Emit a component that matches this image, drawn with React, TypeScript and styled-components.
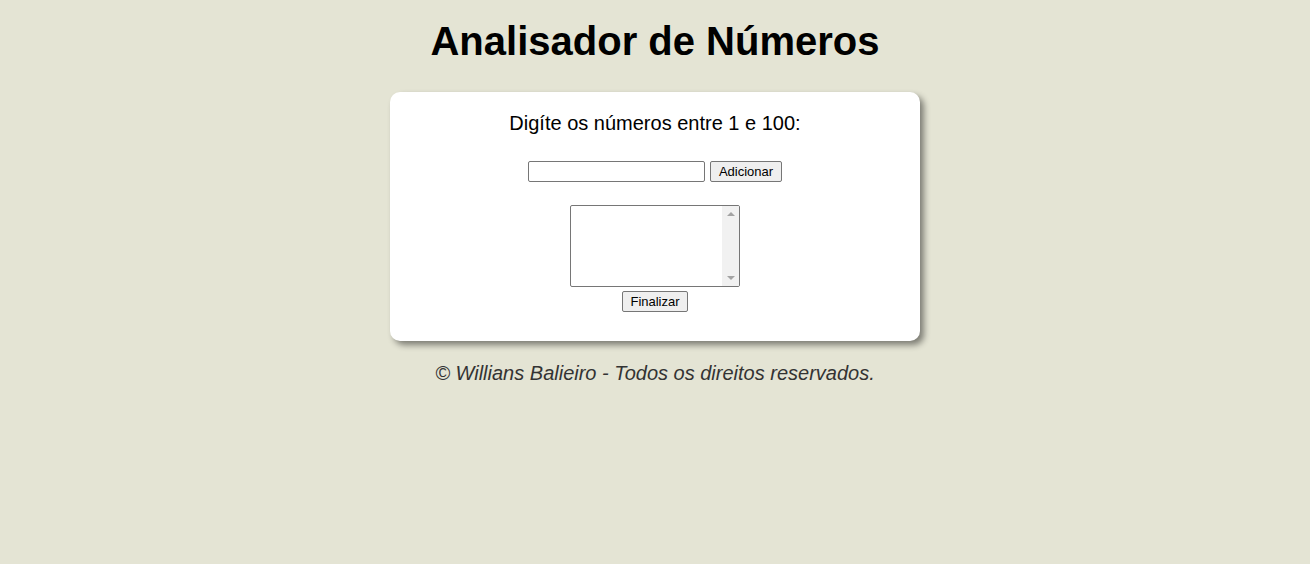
import React, { useState } from "react";
import styled, { createGlobalStyle } from "styled-components";

const GlobalStyle = createGlobalStyle`
  body {
    margin: 0;
    background-color: #e4e4d4;
    font-family: "Liberation Sans", Arial, sans-serif;
  }
`;

const Page = styled.div`
  display: flex;
  flex-direction: column;
  align-items: center;
  padding-top: 18px;
`;

const Title = styled.h1`
  margin: 0;
  font-size: 40px;
  font-weight: 700;
  line-height: 46px;
  color: #000;
`;

const Card = styled.section`
  width: 530px;
  box-sizing: border-box;
  margin-top: 28px;
  padding: 20px 0 29px;
  background: #fff;
  border-radius: 10px;
  box-shadow: 4px 4px 6px rgba(0, 0, 0, 0.45);
  display: flex;
  flex-direction: column;
  align-items: center;
`;

const Prompt = styled.p`
  margin: 0;
  font-size: 20px;
  line-height: 23px;
  color: #000;
`;

const Row = styled.div`
  display: flex;
  gap: 5px;
  margin-top: 26px;
`;

const Field = styled.input`
  width: 177px;
  height: 21px;
  box-sizing: border-box;
  border: 1px solid #767676;
  border-radius: 2px;
  padding: 1px 2px;
  font-family: "Liberation Sans", Arial, sans-serif;
  font-size: 13px;

  &:focus {
    outline: none;
  }
`;

const Button = styled.button<{ $width: number }>`
  width: ${(p) => p.$width}px;
  height: 21px;
  box-sizing: border-box;
  padding: 0;
  background: #efefef;
  border: 1px solid #767676;
  border-radius: 2px;
  font-family: "Liberation Sans", Arial, sans-serif;
  font-size: 13px;
  color: #000;
  cursor: pointer;
`;

const ListBox = styled.div`
  margin-top: 23px;
  width: 170px;
  height: 82px;
  box-sizing: border-box;
  border: 1px solid #767676;
  border-radius: 2px;
  display: flex;
  justify-content: flex-end;
  overflow: hidden;
`;

const ScrollTrack = styled.div`
  width: 17px;
  background: #f1f1f1;
  display: flex;
  flex-direction: column;
  justify-content: space-between;
  align-items: center;
  padding: 6px 0;
`;

const Arrow = styled.div<{ $down?: boolean }>`
  width: 0;
  height: 0;
  border-left: 4px solid transparent;
  border-right: 4px solid transparent;
  ${(p) =>
    p.$down
      ? "border-top: 4px solid #a3a3a3;"
      : "border-bottom: 4px solid #a3a3a3;"}
`;

const FinishButton = styled(Button)`
  margin-top: 4px;
`;

const Footer = styled.p`
  margin: 21px 0 0;
  font-size: 20px;
  line-height: 23px;
  font-style: italic;
  color: #333;
`;

export default function App() {
  const [value, setValue] = useState("");

  return (
    <Page>
      <GlobalStyle />
      <Title>Analisador de Números</Title>
      <Card>
        <Prompt>Digíte os números entre 1 e 100:</Prompt>
        <Row>
          <Field
            type="number"
            value={value}
            onChange={(e) => setValue(e.target.value)}
          />
          <Button $width={72}>Adicionar</Button>
        </Row>
        <ListBox>
          <ScrollTrack>
            <Arrow />
            <Arrow $down />
          </ScrollTrack>
        </ListBox>
        <FinishButton $width={66}>Finalizar</FinishButton>
      </Card>
      <Footer>© Willians Balieiro - Todos os direitos reservados.</Footer>
    </Page>
  );
}
